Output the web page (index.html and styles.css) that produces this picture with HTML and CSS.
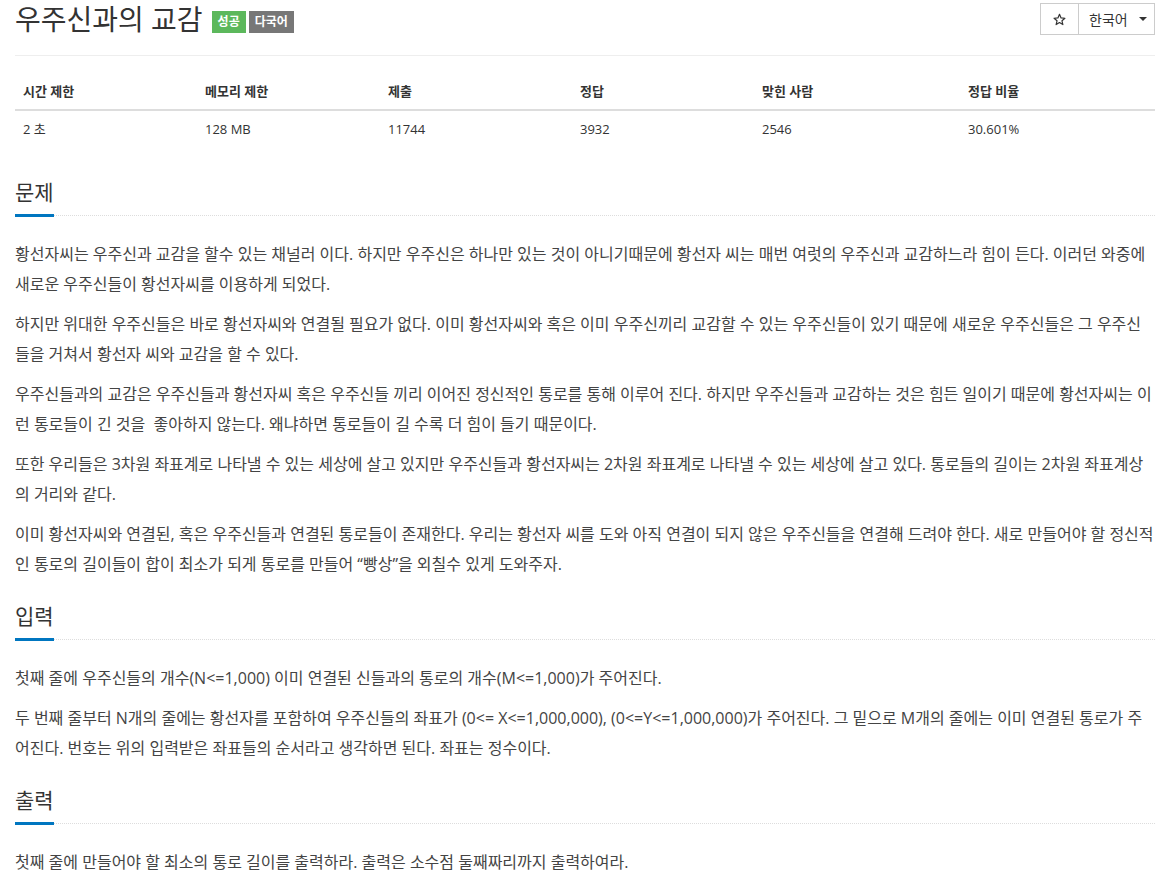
FILE: index.html
```html
<!DOCTYPE html>
<html lang="ko">
<head>
    <meta charset="UTF-8">
    <title>우주신과의 교감</title>
    <link rel="stylesheet" href="styles.css">
</head>
<body>
    <div class="container">
        <div class="page-header">
            <h1>
                <span class="title">우주신과의 교감</span>
                <span class="label label-success">성공</span>
                <span class="label label-default">다국어</span>
            </h1>
            <div class="btn-group">
                <a href="#" class="btn btn-star">
                    <svg width="13" height="13" viewBox="0 0 24 24"><path d="M12 2.5l2.9 6.6 7.1.6-5.4 4.7 1.6 7-6.2-3.7-6.2 3.7 1.6-7L2 9.7l7.1-.6z" fill="none" stroke="#333" stroke-width="2.2" stroke-linejoin="round"/></svg>
                </a>
                <a href="#" class="btn btn-lang">한국어 <span class="caret"></span></a>
            </div>
        </div>

        <table class="info">
            <thead>
                <tr>
                    <th class="c1">시간 제한</th>
                    <th class="c2">메모리 제한</th>
                    <th class="c3">제출</th>
                    <th class="c4">정답</th>
                    <th class="c5">맞힌 사람</th>
                    <th>정답 비율</th>
                </tr>
            </thead>
            <tbody>
                <tr>
                    <td>2 초</td>
                    <td>128 MB</td>
                    <td>11744</td>
                    <td>3932</td>
                    <td>2546</td>
                    <td>30.601%</td>
                </tr>
            </tbody>
        </table>

        <section class="problem-section">
            <div class="headline"><h2>문제</h2></div>
            <div class="problem-text">
                <p>황선자씨는 우주신과 교감을 할수 있는 채널러 이다. 하지만 우주신은 하나만 있는 것이 아니기때문에 황선자 씨는 매번 여럿의 우주신과 교감하느라 힘이 든다. 이러던 와중에 새로운 우주신들이 황선자씨를 이용하게 되었다.</p>
                <p>하지만 위대한 우주신들은 바로 황선자씨와 연결될 필요가 없다. 이미 황선자씨와 혹은 이미 우주신끼리 교감할 수 있는 우주신들이 있기 때문에 새로운 우주신들은 그 우주신들을 거쳐서 황선자 씨와 교감을 할 수 있다.</p>
                <p>우주신들과의 교감은 우주신들과 황선자씨 혹은 우주신들 끼리 이어진 정신적인 통로를 통해 이루어 진다. 하지만 우주신들과 교감하는 것은 힘든 일이기 때문에 황선자씨는 이런 통로들이 긴 것을&nbsp; 좋아하지 않는다. 왜냐하면 통로들이 길 수록 더 힘이 들기 때문이다.</p>
                <p>또한 우리들은 3차원 좌표계로 나타낼 수 있는 세상에 살고 있지만 우주신들과 황선자씨는 2차원 좌표계로 나타낼 수 있는 세상에 살고 있다. 통로들의 길이는 2차원 좌표계상의 거리와 같다.</p>
                <p>이미 황선자씨와 연결된, 혹은 우주신들과 연결된 통로들이 존재한다. 우리는 황선자 씨를 도와 아직 연결이 되지 않은 우주신들을 연결해 드려야 한다. 새로 만들어야 할 정신적인 통로의 길이들이 합이 최소가 되게 통로를 만들어 “빵상”을 외칠수 있게 도와주자.</p>
            </div>
        </section>

        <section class="problem-section">
            <div class="headline"><h2>입력</h2></div>
            <div class="problem-text">
                <p>첫째 줄에 우주신들의 개수(N&lt;=1,000) 이미 연결된 신들과의 통로의 개수(M&lt;=1,000)가 주어진다.</p>
                <p>두 번째 줄부터 N개의 줄에는 황선자를 포함하여 우주신들의 좌표가 (0&lt;= X&lt;=1,000,000), (0&lt;=Y&lt;=1,000,000)가 주어진다. 그 밑으로 M개의 줄에는 이미 연결된 통로가 주어진다. 번호는 위의 입력받은 좌표들의 순서라고 생각하면 된다. 좌표는 정수이다.</p>
            </div>
        </section>

        <section class="problem-section">
            <div class="headline"><h2>출력</h2></div>
            <div class="problem-text">
                <p>첫째 줄에 만들어야 할 최소의 통로 길이를 출력하라. 출력은 소수점 둘째짜리까지 출력하여라.</p>
            </div>
        </section>
    </div>
</body>
</html>
```

FILE: styles.css
```css
*{
    margin: 0;
    padding: 0;
    box-sizing: border-box;
}
body{
    font-family: "Open Sans", "Noto Sans CJK KR", sans-serif;
    color: #333;
    background-color: #fff;
}
.container{
    width: 1140px;
    margin-left: 15px;
}
/* 제목 */
.page-header{
    display: flex;
    justify-content: space-between;
    align-items: flex-start;
    padding: 1px 0 18px;
    border-bottom: 1px solid #eee;
}
.page-header h1{
    display: flex;
    align-items: center;
    font-size: 28px;
    font-weight: 400;
    line-height: 36px;
}
.title{
    margin-right: 9px;
}
.label{
    display: inline-block;
    font-size: 12px;
    font-weight: 700;
    line-height: 22px;
    height: 22px;
    padding: 0 6px;
    color: #fff;
    margin-right: 3px;
    margin-top: 5px;
}
.label-success{
    background-color: #5cb85c;
}
.label-default{
    background-color: #777;
}
.btn-group{
    display: flex;
    margin-top: 2px;
}
.btn{
    display: flex;
    align-items: center;
    height: 32px;
    border: 1px solid #ccc;
    color: #333;
    text-decoration: none;
    font-size: 14px;
}
.btn-star{
    width: 39px;
    justify-content: center;
}
.btn-lang{
    width: 76px;
    border-left: none;
    padding-left: 10px;
}
.caret{
    display: inline-block;
    margin-left: 11px;
    border-top: 4px solid #333;
    border-left: 4px solid transparent;
    border-right: 4px solid transparent;
}
/* 정보 표 */
.info{
    width: 100%;
    border-collapse: collapse;
    margin-top: 17px;
    margin-bottom: 30px;
    font-size: 13px;
    text-align: left;
}
.info th,
.info td{
    padding: 8px;
    line-height: 20px;
}
.info th{
    font-weight: 700;
    border-bottom: 2px solid #ddd;
}
.info .c1{ width: 182px; }
.info .c2{ width: 183px; }
.info .c3{ width: 192px; }
.info .c4{ width: 182px; }
.info .c5{ width: 206px; }
/* 문제 영역 */
.problem-section{
    margin-bottom: 22px;
}
.headline{
    border-bottom: 1px dotted #ddd;
    margin-bottom: 23px;
}
.headline h2{
    display: inline-block;
    font-size: 21px;
    font-weight: 400;
    line-height: 30px;
    padding-bottom: 7px;
    border-bottom: 3px solid #0076c0;
    margin-bottom: -2px;
    color: #333;
}
.problem-text p{
    font-size: 16px;
    line-height: 30px;
    margin-bottom: 10px;
    color: #444;
}
```
